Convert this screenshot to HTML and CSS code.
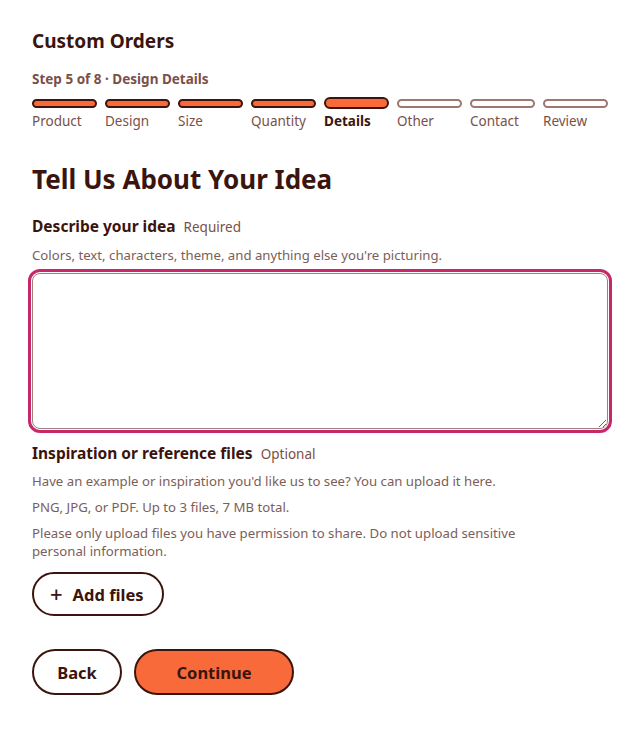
FILE: index.html
```html
<!DOCTYPE html>
<html lang="en">
<head>
<meta charset="utf-8">
<title>Custom Orders</title>
<link rel="stylesheet" href="styles.css">
</head>
<body>
<main class="page">
  <h1 class="app-title">Custom Orders</h1>
  <p class="step-label">Step 5 of 8 · Design Details</p>
  <ol class="progress">
    <li class="step done"><span class="bar"></span><span class="name">Product</span></li>
    <li class="step done"><span class="bar"></span><span class="name">Design</span></li>
    <li class="step done"><span class="bar"></span><span class="name">Size</span></li>
    <li class="step done"><span class="bar"></span><span class="name">Quantity</span></li>
    <li class="step current"><span class="bar"></span><span class="name">Details</span></li>
    <li class="step"><span class="bar"></span><span class="name">Other</span></li>
    <li class="step"><span class="bar"></span><span class="name">Contact</span></li>
    <li class="step"><span class="bar"></span><span class="name">Review</span></li>
  </ol>

  <h2 class="page-title">Tell Us About Your Idea</h2>

  <section class="field idea">
    <label class="field-label" for="idea">Describe your idea <span class="tag">Required</span></label>
    <p class="hint first">Colors, text, characters, theme, and anything else you're picturing.</p>
    <div class="ring"><textarea id="idea" class="textarea"></textarea></div>
  </section>

  <section class="field files">
    <div class="field-label">Inspiration or reference files <span class="tag">Optional</span></div>
    <p class="hint first">Have an example or inspiration you'd like us to see? You can upload it here.</p>
    <p class="hint">PNG, JPG, or PDF. Up to 3 files, 7 MB total.</p>
    <p class="hint narrow">Please only upload files you have permission to share. Do not upload sensitive personal information.</p>
    <button class="btn add"><span class="plus">+</span>Add files</button>
  </section>

  <div class="actions">
    <button class="btn back">Back</button>
    <button class="btn primary">Continue</button>
  </div>
</main>
</body>
</html>
```

FILE: styles.css
```css
* { box-sizing: border-box; }
html, body { margin: 0; background: #fff; }
body {
  font-family: "Noto Sans", "Open Sans", sans-serif;
  color: #3a140d;
}
.page {
  padding: 29px 32px 32px;
  display: flex;
  flex-direction: column;
}
.app-title {
  margin: 0;
  font-size: 19px;
  font-weight: 700;
  line-height: 24px;
}
.step-label {
  margin: 17px 0 0;
  font-size: 13.5px;
  font-weight: 700;
  line-height: 18px;
  color: #7a5048;
}
.progress {
  list-style: none;
  margin: 9px 0 0;
  padding: 0;
  display: grid;
  grid-template-columns: repeat(8, 1fr);
  gap: 8px;
}
.step {
  display: flex;
  flex-direction: column;
}
.bar {
  display: block;
  height: 9px;
  margin-top: 2px;
  border: 2px solid #9c7870;
  border-radius: 6px;
  background: #fff;
}
.step.done .bar {
  border-color: #3a140d;
  background: #f96a3a;
}
.step.current .bar {
  height: 12px;
  margin-top: 0;
  border-color: #3a140d;
  background: #f96a3a;
}
.name {
  margin-top: 4px;
  font-size: 13.5px;
  line-height: 18px;
  color: #7a5048;
}
.step.current .name {
  margin-top: 3px;
  font-weight: 700;
  color: #3a140d;
}
.page-title {
  margin: 33px 0 0;
  font-size: 26px;
  font-weight: 700;
  line-height: 32px;
}
.field { display: flex; flex-direction: column; }
.idea { margin-top: 20px; }
.field-label {
  font-size: 15.5px;
  font-weight: 700;
  line-height: 22px;
}
.tag {
  margin-left: 4px;
  font-size: 13.5px;
  font-weight: 400;
  color: #7a5048;
}
.hint {
  margin: 8px 0 0;
  font-size: 13.2px;
  line-height: 18px;
  color: #7b5e57;
}
.files .hint.first { margin-top: 7px; }
.narrow { max-width: 505px; }
.ring {
  margin-top: 5px;
  margin-left: -4px;
  margin-right: -4px;
  padding: 1px;
  border: 3px solid #c8286a;
  border-radius: 12px;
}
.textarea {
  display: block;
  width: 100%;
  height: 156px;
  border: 1px solid #a08078;
  border-radius: 8px;
  resize: vertical;
  font: inherit;
  outline: none;
  padding: 8px;
}
.files { margin-top: 9px; }
.btn {
  font-family: inherit;
  font-weight: 700;
  font-size: 16.5px;
  color: #3a140d;
  background: #fff;
  border: 2px solid #3a140d;
  border-radius: 999px;
  cursor: pointer;
}
.add {
  align-self: flex-start;
  margin-top: 12px;
  height: 44px;
  padding: 0 18px 0 16px;
  display: flex;
  align-items: center;
  gap: 10px;
}
.plus { font-size: 22px; font-weight: 500; line-height: 1; margin-top: -2px; }
.actions {
  margin-top: 33px;
  display: flex;
  gap: 12px;
}
.back { height: 46px; width: 90px; }
.primary {
  height: 46px;
  width: 160px;
  background: #f96a3a;
}
```
